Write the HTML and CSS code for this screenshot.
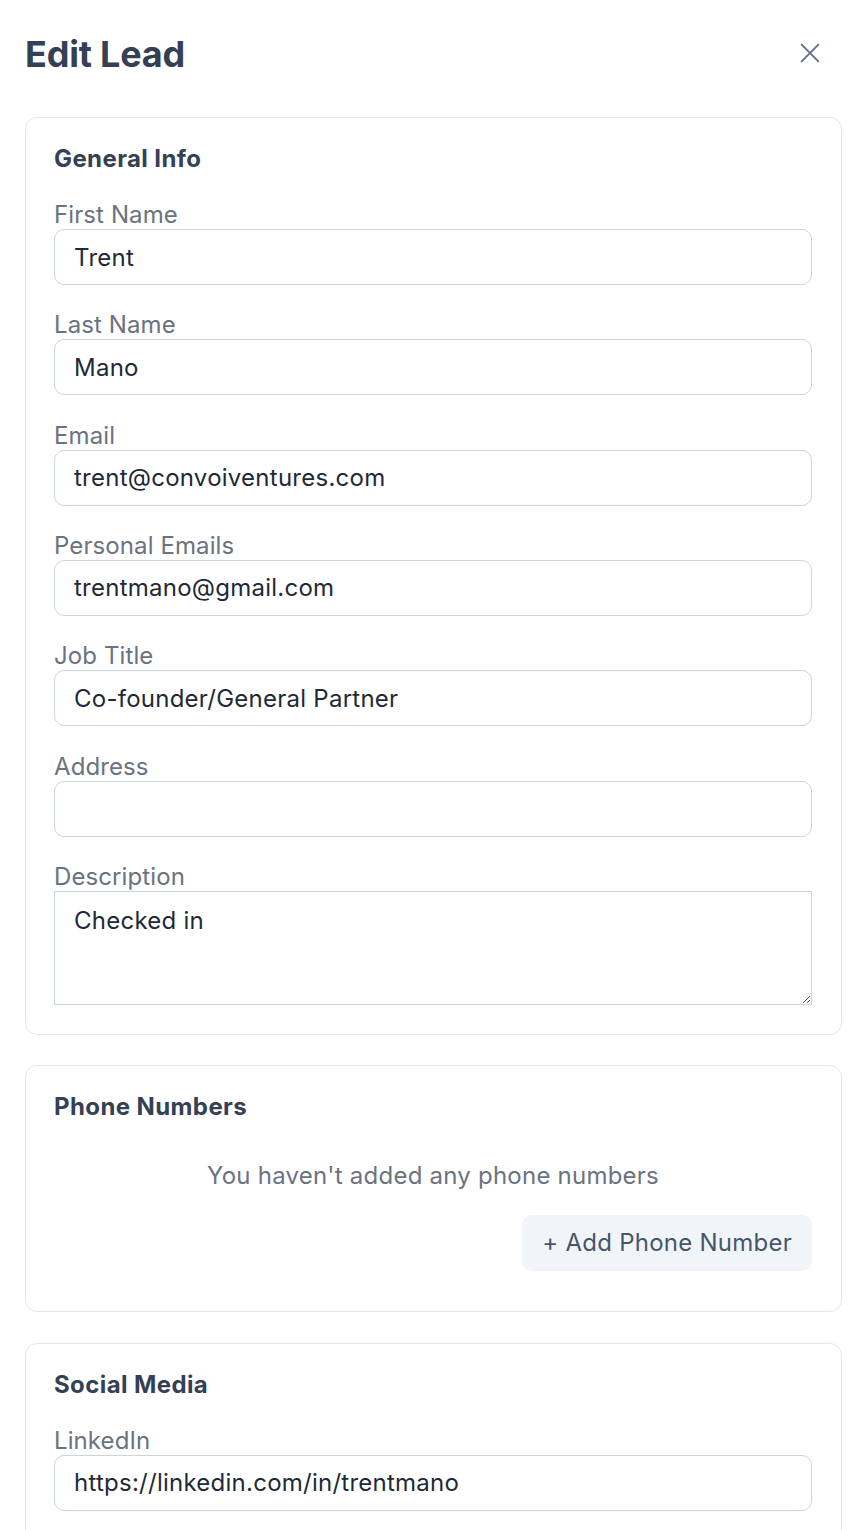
FILE: index.html
```html
<!DOCTYPE html>
<html lang="en">
<head>
<meta charset="utf-8">
<title>Edit Lead</title>
<link rel="stylesheet" href="styles.css">
</head>
<body>
<div class="page">
  <header class="header">
    <h1 class="title">Edit Lead</h1>
    <button class="close" aria-label="Close">
      <svg width="24" height="24" viewBox="0 0 24 24" fill="none" stroke="currentColor" stroke-width="2.4" stroke-linecap="round"><path d="M2 2L22 22M22 2L2 22"/></svg>
    </button>
  </header>

  <section class="card">
    <h2 class="card-title">General Info</h2>
    <div class="fields">
      <label class="field"><span class="label">First Name</span><input class="input" value="Trent"></label>
      <label class="field"><span class="label">Last Name</span><input class="input" value="Mano"></label>
      <label class="field"><span class="label">Email</span><input class="input" value="trent@convoiventures.com"></label>
      <label class="field"><span class="label">Personal Emails</span><input class="input" value="trentmano@gmail.com"></label>
      <label class="field"><span class="label">Job Title</span><input class="input" value="Co-founder/General Partner"></label>
      <label class="field"><span class="label">Address</span><input class="input" value=""></label>
      <label class="field"><span class="label">Description</span><textarea class="textarea">Checked in</textarea></label>
    </div>
  </section>

  <section class="card card-phone">
    <h2 class="card-title">Phone Numbers</h2>
    <p class="empty">You haven't added any phone numbers</p>
    <div class="actions"><button class="btn-add">+ Add Phone Number</button></div>
  </section>

  <section class="card card-social">
    <h2 class="card-title">Social Media</h2>
    <div class="fields">
      <label class="field"><span class="label">LinkedIn</span><input class="input" value="https://linkedin.com/in/trentmano"></label>
    </div>
  </section>
</div>
</body>
</html>
```

FILE: styles.css
```css
* { box-sizing: border-box; }
html, body { margin: 0; padding: 0; background: #ffffff; }
body { font-family: Inter, "Noto Sans", sans-serif; color: #1f2937; }
.page { padding: 32px 20px 0 25px; display: flex; flex-direction: column; gap: 30px; }
.header { display: flex; align-items: center; justify-content: space-between; margin-bottom: 11px; }
.title { margin: 0; font-size: 36px; line-height: 44px; font-weight: 700; color: #344054; letter-spacing: -0.2px; }
.close { border: 0; background: none; padding: 0; margin: 0 22px 2px 0; width: 20px; height: 20px; color: #64748b; display: flex; }
.close svg { width: 20px; height: 20px; }
.card { border: 1px solid #e5e7eb; border-radius: 12px; padding: 28px 29px 29px 28px; }
.card-title { margin: 0; font-size: 24px; line-height: 26px; font-weight: 700; color: #344054; letter-spacing: 0.4px; }
.fields { display: flex; flex-direction: column; gap: 26.33px; margin-top: 29px; }
.field { display: flex; flex-direction: column; }
.label { font-size: 24px; line-height: 28px; color: #6b7280; letter-spacing: 0.1px; }
.input, .textarea { font-family: Inter, "Noto Sans", sans-serif; font-size: 24px; line-height: 36px; color: #1f2937; border: 1px solid #cbd5e1; background: #fff; width: 100%; outline: none; letter-spacing: 0.25px; }
.input { height: 56px; border-radius: 10px; padding: 9px 19px; }
.textarea { height: 114px; border-radius: 0; padding: 11px 19px; resize: vertical; display: block; }
.card-phone { padding-bottom: 40px; }
.card-social { margin-top: 1px; }
.empty { margin: 38px 0 0; text-align: center; font-size: 24px; line-height: 36px; color: #6b7280; letter-spacing: 0.23px; }
.actions { display: flex; justify-content: flex-end; margin-top: 21px; }
.btn-add { font-family: Inter, "Noto Sans", sans-serif; font-size: 24px; line-height: 36px; height: 56px; padding: 10px 20px; border: 0; border-radius: 10px; background: #f1f5f9; color: #475569; letter-spacing: 0.25px; }
```
